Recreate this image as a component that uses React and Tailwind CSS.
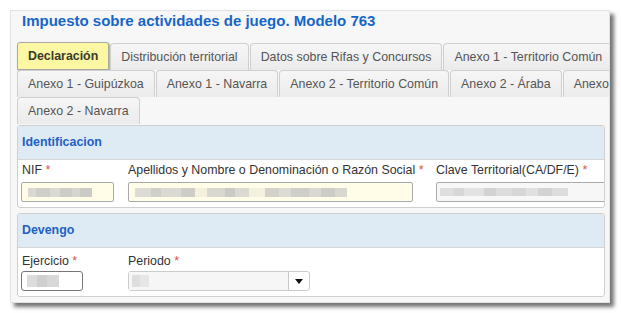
import React from "react";

const Tab = ({ children, active }) =>
  active ? (
    <div className="h-[28px] -mt-[1px] px-[10px] flex items-center border border-[#a8a8a0] rounded-t-[3px] bg-[#fbf7a3] shadow-[1px_1px_2px_rgba(0,0,0,0.35)] font-bold text-[#3a3a2a] whitespace-nowrap">
      {children}
    </div>
  ) : (
    <div className="h-[27px] px-[10px] flex items-center border border-b-0 border-[#cfcfcf] rounded-t-[4px] bg-gradient-to-b from-[#f6f6f6] to-[#ebebeb] text-[#555] whitespace-nowrap">
      {children}
    </div>
  );

const Blur = ({ blocks, h = "h-[9px]" }) => (
  <div className={`flex items-center blur-[0.6px] ${h}`}>
    {blocks.map((b, i) => (
      <div key={i} style={{ width: b[0], background: b[1] }} className="h-full" />
    ))}
  </div>
);

const Req = () => <span className="text-[#d9534f]"> *</span>;

const Panel = ({ title, children, bodyClass }) => (
  <div className="w-[588px] border border-[#cfcfcf] rounded-[3px] bg-white overflow-hidden">
    <div className="h-[34px] flex items-center pl-[4px] bg-[#dfebf4] border-b border-[#d6d6d6] font-bold text-[#2160c4]">
      {title}
    </div>
    <div className={bodyClass}>{children}</div>
  </div>
);

export default function App() {
  return (
    <div className="w-[621px] h-[313px] bg-white overflow-hidden font-['Liberation_Sans',Arial,sans-serif] text-[12.4px] leading-[15px]">
      <div className="ml-[10px] mt-[10px] w-[600px] h-[293px] bg-[#f7f7f7] border border-[#e2e2e2] shadow-[4px_4px_4px_rgba(0,0,0,0.55)] overflow-hidden">
        <div className="h-[32px] pl-[11px] pt-[1px] text-[15px] leading-[18px] font-bold text-[#1566c8] whitespace-nowrap">
          Impuesto sobre actividades de juego. Modelo 763
        </div>
        <div className="pl-[6px] w-[760px]">
          <div className="flex gap-[1px] items-end">
            <Tab active>Declaración</Tab>
            <Tab>Distribución territorial</Tab>
            <Tab>Datos sobre Rifas y Concursos</Tab>
            <Tab>Anexo 1 - Territorio Común</Tab>
          </div>
          <div className="flex gap-[1px]">
            <Tab>Anexo 1 - Guipúzkoa</Tab>
            <Tab>Anexo 1 - Navarra</Tab>
            <Tab>Anexo 2 - Territorio Común</Tab>
            <Tab>Anexo 2 - Áraba</Tab>
            <Tab>Anexo 2 - Guipúzkoa</Tab>
          </div>
          <div className="flex gap-[1px]">
            <Tab>Anexo 2 - Navarra</Tab>
          </div>
        </div>
        <div className="pl-[6px] pt-[1px]">
          <Panel title="Identificacion" bodyClass="pl-[3px] pt-[3px] pb-[5px] flex">
            <div className="w-[107px] shrink-0">
              <div className="pl-[1px] text-[#333] whitespace-nowrap">NIF<Req /></div>
              <div className="mt-[4px] w-[93px] h-[20px] border border-[#aaa] rounded-[2px] bg-[#fffde8] flex items-center pl-[6px]">
                <Blur blocks={[[8, "#d9d9d2"], [14, "#cfcfc9"], [10, "#dadad4"], [12, "#cdcdc7"], [8, "#d6d6d0"], [12, "#cbcbc5"]]} />
              </div>
            </div>
            <div className="w-[308px] shrink-0">
              <div className="text-[#333] whitespace-nowrap">Apellidos y Nombre o Denominación o Razón Social<Req /></div>
              <div className="mt-[4px] w-[285px] h-[20px] border border-[#aaa] rounded-[2px] bg-[#fffde8] flex items-center pl-[6px]">
                <Blur blocks={[[16, "#dcdcd4"], [10, "#d0d0ca"], [20, "#dadad3"], [14, "#cecec8"], [12, "#f4f2df"], [18, "#d8d8d1"], [10, "#cbcbc5"], [14, "#dadad3"], [16, "#f4f2df"], [14, "#d2d2cb"], [12, "#dcdcd5"], [18, "#cfcfc9"], [12, "#d9d9d2"], [14, "#cdcdc7"], [12, "#d8d8d1"]]} />
              </div>
            </div>
            <div className="w-[200px] shrink-0">
              <div className="text-[#333] whitespace-nowrap">Clave Territorial(CA/DF/E)<Req /></div>
              <div className="mt-[4px] w-[200px] h-[20px] border border-[#aaa] rounded-[2px] bg-[#f7f7f7] flex items-center pl-[3px]">
                <Blur h="h-[8px]" blocks={[[14, "#dedede"], [10, "#d6d6d6"], [20, "#e2e2e2"], [12, "#d2d2d2"], [16, "#dddddd"], [14, "#d6d6d6"], [12, "#e0e0e0"], [14, "#d3d3d3"], [16, "#dcdcdc"]]} />
              </div>
            </div>
          </Panel>
          <div className="mt-[5px]">
            <Panel title="Devengo" bodyClass="pl-[3px] pt-[6px] pb-[5px] flex">
              <div className="w-[107px] shrink-0">
                <div className="pl-[1px] text-[#333] whitespace-nowrap">Ejercicio<Req /></div>
                <div className="mt-[2px] w-[62px] h-[20px] border border-[#777] rounded-[3px] bg-white flex items-center pl-[5px]">
                  <Blur h="h-[12px]" blocks={[[10, "#dcdcdc"], [10, "#cfcfcf"], [12, "#d8d8d8"]]} />
                </div>
              </div>
              <div className="w-[182px] shrink-0">
                <div className="text-[#333] whitespace-nowrap">Periodo<Req /></div>
                <div className="mt-[2px] w-[182px] h-[20px] border border-[#ccc] rounded-[3px] bg-white flex">
                  <div className="flex-1 bg-[#f6f6f6] border-r border-[#c8c8c8] flex items-center pl-[3px]">
                    <Blur h="h-[12px]" blocks={[[8, "#dedede"], [9, "#e6e6e6"]]} />
                  </div>
                  <div className="w-[20px] flex items-center justify-center">
                    <svg width="8" height="5" viewBox="0 0 8 5"><path d="M0 0H8L4 5Z" fill="#111" /></svg>
                  </div>
                </div>
              </div>
            </Panel>
          </div>
        </div>
      </div>
    </div>
  );
}
